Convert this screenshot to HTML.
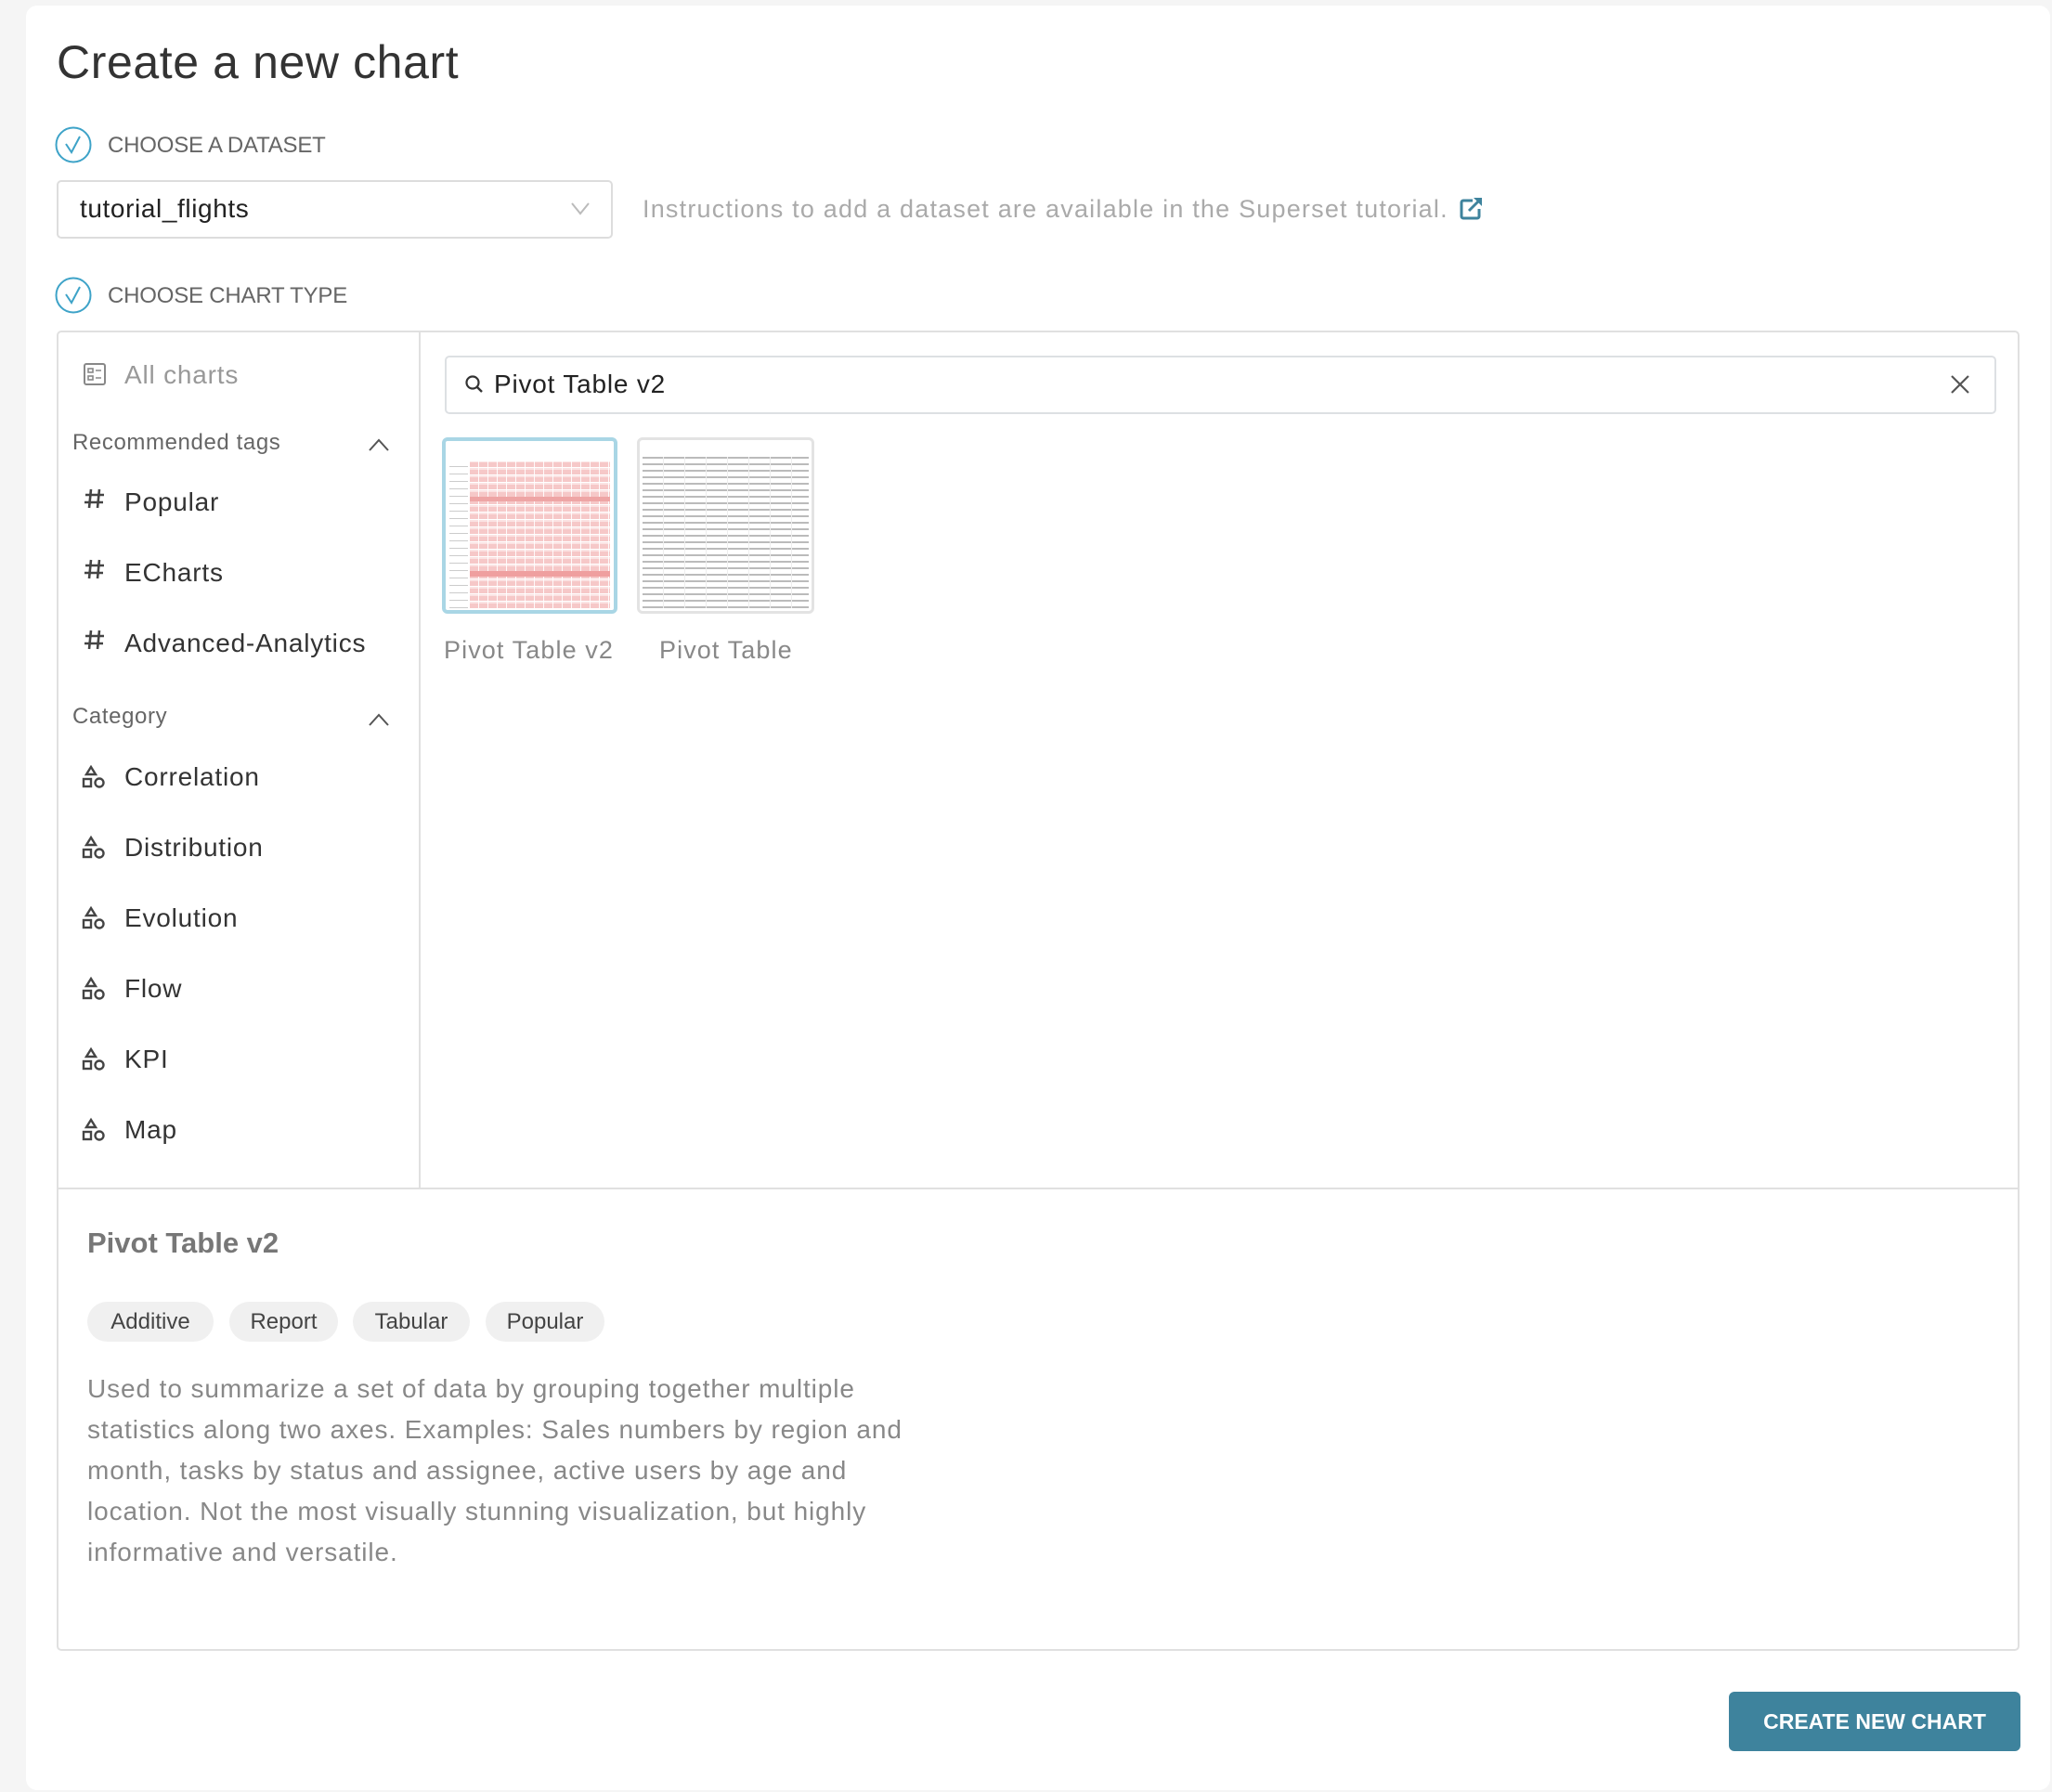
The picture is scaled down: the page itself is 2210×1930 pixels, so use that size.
<!DOCTYPE html>
<html><head><meta charset="utf-8"><style>
*{box-sizing:border-box;margin:0;padding:0}
body{width:2210px;height:1930px;background:#f5f5f5;font-family:"Liberation Sans",sans-serif;position:relative;overflow:hidden}
.a{position:absolute;white-space:nowrap}
.card{position:absolute;left:28px;top:6px;width:2180px;height:1922px;background:#fff;border-radius:12px}
.lbl{font-size:24px;color:#666;letter-spacing:-0.2px}
.it{font-size:28px;color:#333;letter-spacing:0.8px}
.cat{font-size:24px;color:#666;letter-spacing:0.6px}
.thumb{position:absolute;border-radius:6px;overflow:hidden;background:#fff}
.tag{position:absolute;top:1402px;height:43px;border-radius:22px;background:#f0f0f0;font-size:24px;color:#444;line-height:43px;text-align:center}
</style></head><body>
<div class="card"></div>
<div class="a" style="left:61px;top:38px;font-size:50px;color:#333;letter-spacing:0.6px">Create a new chart</div>

<svg class="a" style="left:59px;top:136px" width="40" height="40"><circle cx="20" cy="20" r="18.5" fill="none" stroke="#3ea3c8" stroke-width="2"/><path d="M12 19 L18 28 L27 11" fill="none" stroke="#3ea3c8" stroke-width="2"/></svg>
<div class="a lbl" style="left:116px;top:143px">CHOOSE A DATASET</div>

<div class="a" style="left:61px;top:194px;width:599px;height:63px;border:2px solid #ddd;border-radius:5px"></div>
<div class="a" style="left:86px;top:209px;font-size:28px;color:#222;letter-spacing:0.6px">tutorial_flights</div>
<svg class="a" style="left:615px;top:218px" width="20" height="14"><path d="M1 1 L10 12 L19 1" fill="none" stroke="#bbb" stroke-width="2"/></svg>
<div class="a" style="left:692px;top:210px;font-size:27px;color:#aaa;letter-spacing:1.2px">Instructions to add a dataset are available in the Superset tutorial.</div>
<svg class="a" style="left:1570px;top:211px" width="28" height="28"><path d="M16 5 H6 a2 2 0 0 0 -2 2 V22 a2 2 0 0 0 2 2 H21 a2 2 0 0 0 2 -2 V14" fill="none" stroke="#3e839d" stroke-width="3"/><path d="M12 16 L24 4" stroke="#3e839d" stroke-width="3"/><path d="M17 2 H26 V11 Z" fill="#3e839d"/></svg>

<svg class="a" style="left:59px;top:298px" width="40" height="40"><circle cx="20" cy="20" r="18.5" fill="none" stroke="#3ea3c8" stroke-width="2"/><path d="M12 19 L18 28 L27 11" fill="none" stroke="#3ea3c8" stroke-width="2"/></svg>
<div class="a lbl" style="left:116px;top:305px">CHOOSE CHART TYPE</div>

<div class="a" style="left:61px;top:356px;width:2114px;height:1422px;border:2px solid #e0e0e0;border-radius:5px"></div>
<div class="a" style="left:451px;top:357px;width:2px;height:922px;background:#e0e0e0"></div>
<div class="a" style="left:62px;top:1279px;width:2112px;height:2px;background:#e0e0e0"></div>

<svg class="a" style="left:89px;top:390px" width="26" height="26"><rect x="2" y="2" width="22" height="22" rx="2" fill="none" stroke="#888" stroke-width="2"/><rect x="6" y="7" width="5" height="4" fill="none" stroke="#888" stroke-width="1.6"/><rect x="6" y="15" width="5" height="4" fill="none" stroke="#888" stroke-width="1.6"/><path d="M14 9H20M14 17H20" stroke="#888" stroke-width="1.6"/></svg>
<div class="a" style="left:134px;top:388px;font-size:28px;color:#999;letter-spacing:0.8px">All charts</div>

<div class="a cat" style="left:78px;top:463px">Recommended tags</div>
<svg class="a" style="left:397px;top:472px" width="22" height="14"><path d="M1 13 L11 2 L21 13" fill="none" stroke="#555" stroke-width="2"/></svg>
<svg class="a" style="left:90px;top:526px" width="24" height="190"><defs><path id="hs" d="M8 1 L6 21 M17 1 L15 21 M2 7 H22 M1 15 H21" stroke="#444" stroke-width="2.6" fill="none"/></defs><use href="#hs"/><use href="#hs" y="76"/><use href="#hs" y="152"/></svg>
<div class="a it" style="left:134px;top:525px">Popular</div>
<div class="a it" style="left:134px;top:601px">ECharts</div>
<div class="a it" style="left:134px;top:677px">Advanced-Analytics</div>

<div class="a cat" style="left:78px;top:758px">Category</div>
<svg class="a" style="left:397px;top:768px" width="22" height="14"><path d="M1 13 L11 2 L21 13" fill="none" stroke="#555" stroke-width="2"/></svg>

<div class="a it" style="left:134px;top:821px">Correlation</div>
<div class="a it" style="left:134px;top:897px">Distribution</div>
<div class="a it" style="left:134px;top:973px">Evolution</div>
<div class="a it" style="left:134px;top:1049px">Flow</div>
<div class="a it" style="left:134px;top:1125px">KPI</div>
<div class="a it" style="left:134px;top:1201px">Map</div>
<svg class="a" style="left:88px;top:824px" width="30" height="410">
<defs><g id="ic" fill="none" stroke="#444" stroke-width="2.4"><path d="M10 2 L15 10 H5 Z"/><rect x="2" y="15" width="8" height="8"/><circle cx="19" cy="19" r="4.5"/></g></defs>
<use href="#ic" y="0"/><use href="#ic" y="76"/><use href="#ic" y="152"/><use href="#ic" y="228"/><use href="#ic" y="304"/><use href="#ic" y="380"/></svg>

<div class="a" style="left:479px;top:383px;width:1671px;height:63px;border:2px solid #dde0e3;border-radius:5px"></div>
<svg class="a" style="left:500px;top:403px" width="22" height="22"><circle cx="9" cy="9" r="6.5" fill="none" stroke="#333" stroke-width="2.2"/><path d="M14 14 L19 19" stroke="#333" stroke-width="2.4"/></svg>
<div class="a" style="left:532px;top:398px;font-size:28px;color:#222;letter-spacing:0.8px">Pivot Table v2</div>
<svg class="a" style="left:2100px;top:403px" width="22" height="22"><path d="M2 2 L20 20 M20 2 L2 20" stroke="#555" stroke-width="2.2"/></svg>

<div class="thumb" style="left:476px;top:471px;width:189px;height:190px;border:4px solid #a9d6e5">
<div style="position:absolute;left:26px;top:22px;right:4px;bottom:2px;background:repeating-linear-gradient(90deg,transparent 0 9px,rgba(255,255,255,.9) 9px 10px),repeating-linear-gradient(0deg,#f6c8c8 0 5px,#fbe3e3 5px 7px,#fff 7px 8px)"></div>
<div style="position:absolute;left:4px;top:22px;width:20px;bottom:2px;background:repeating-linear-gradient(0deg,#ccc 0 1px,#fff 1px 8px)"></div>
<div style="position:absolute;left:26px;top:140px;right:4px;height:6px;background:#ef9f9f"></div>
<div style="position:absolute;left:26px;top:60px;right:4px;height:5px;background:#eea5a5"></div>
</div>
<div class="thumb" style="left:686px;top:471px;width:191px;height:190px;border:3px solid #e3e3e3">
<div style="position:absolute;left:3px;top:18px;right:3px;bottom:3px;background:repeating-linear-gradient(90deg,transparent 0 22px,#eee 22px 23px),repeating-linear-gradient(0deg,#bbb 0 2px,#fff 2px 7px)"></div>
</div>
<div class="a" style="left:478px;top:685px;font-size:27px;color:#888;letter-spacing:1.1px">Pivot Table v2</div>
<div class="a" style="left:710px;top:685px;font-size:27px;color:#888;letter-spacing:1.1px">Pivot Table</div>

<div class="a" style="left:94px;top:1321px;font-size:31px;color:#777;font-weight:bold">Pivot Table v2</div>
<div class="tag" style="left:94px;width:136px">Additive</div>
<div class="tag" style="left:247px;width:117px">Report</div>
<div class="tag" style="left:380px;width:126px">Tabular</div>
<div class="tag" style="left:523px;width:128px">Popular</div>
<div class="a" style="left:94px;top:1474px;font-size:28px;color:#888;line-height:44px;white-space:normal;width:1100px;letter-spacing:0.9px">Used to summarize a set of data by grouping together multiple<br>statistics along two axes. Examples: Sales numbers by region and<br>month, tasks by status and assignee, active users by age and<br>location. Not the most visually stunning visualization, but highly<br>informative and versatile.</div>

<div class="a" style="left:1862px;top:1822px;width:314px;height:64px;background:#3e839d;border-radius:6px;color:#fff;font-size:23px;line-height:64px;text-align:center;font-weight:bold">CREATE NEW CHART</div>
</body></html>
